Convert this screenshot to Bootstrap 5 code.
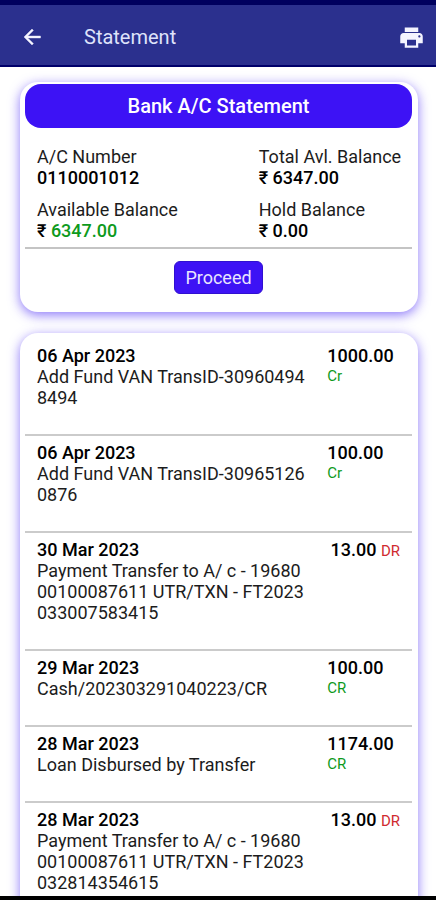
<!DOCTYPE html>
<html lang="en">
<head>
<meta charset="utf-8">
<meta name="viewport" content="width=device-width, initial-scale=1">
<title>Statement</title>
<link href="https://cdn.jsdelivr.net/npm/bootstrap@5.3.0/dist/css/bootstrap.min.css" rel="stylesheet">
<style>
  body { font: 400 18px/21px Roboto, sans-serif; color: #1c1c1c; background: #000; padding-bottom: 4px; }
  .app-bar { background: #2b308e; border-top: 5px solid #00005e; border-bottom: 2px solid #00006a; padding: 4px 11px 0 20px; height: 67px; color: #f4f4ff; }
  .app-bar h1 { font-size: 20px; font-weight: 400; padding-left: 40px; color: #dfe3fb; }
  .app-bar .btn { color: inherit; }
  .screen { background: #fff; padding: 15px 18px 0 20px; }
  .panel { border: 0; border-radius: 18px; padding: 0 6px 0 5px; box-shadow: 0 3px 12px rgba(64, 30, 245, .6); }
  .summary { margin-bottom: 21px; }
  .banner { background: #3d12f5; border-radius: 16px; font-size: 20px; font-weight: 500; line-height: 24px; padding: 10px; margin-top: 2px; }
  .strong-text { font-weight: 500; color: #000; }
  .balances { border-bottom: 2px solid #c4c4c4; row-gap: 11px; padding: 2px 0 6px; }
  .inset { padding-left: 12px; }
  .btn-proceed { --bs-btn-color: #e9e4ff; --bs-btn-bg: #3d12f5; --bs-btn-border-color: #3010d0; --bs-btn-hover-bg: #2f0ad0; --bs-btn-hover-color: #fff; --bs-btn-font-size: 18px; --bs-btn-padding-x: 10px; --bs-btn-padding-y: 5px; --bs-btn-border-radius: 6px; --bs-btn-line-height: 21px; }
  .proceed-row { padding: 12px 0 18px; }
  .history { padding-top: 6px; }
  .entry { padding: 6px 0 26px; border-bottom: 2px solid #cbcbcb; }
  .entry:last-child { border-bottom: 0; }
  .narration { word-break: break-all; padding-right: 8px; }
  .kind { font-size: 15px; }
  .debit-amount { padding-right: 12px; }
  .credit { color: #0d9a1c; }
  .debit { color: #d02a30; }
</style>
</head>
<body class="vh-100 d-flex flex-column overflow-hidden">
<header class="app-bar d-flex align-items-center flex-shrink-0">
  <button type="button" class="btn border-0 p-0 d-flex" aria-label="Back">
    <svg width="24" height="24" viewBox="0 0 24 24" fill="currentColor" aria-hidden="true"><path d="M20.500 11H7.830l5.590-5.590L12 4l-8 8 8 8 1.410-1.410L7.830 13H20.500v-2z" stroke="currentColor" stroke-width=".4"/></svg>
  </button>
  <h1 class="mb-0 me-auto">Statement</h1>
  <button type="button" class="btn border-0 p-0 d-flex" aria-label="Print">
    <svg width="27" height="27" viewBox="0 0 24 24" fill="currentColor" aria-hidden="true"><path d="M19 8H5c-1.660 0-3 1.340-3 3v6h4v4h12v-4h4v-6c0-1.660-1.340-3-3-3zm-3 11H8v-5h8v5zm3-7c-.55 0-1-.45-1-1s.45-1 1-1 1 .45 1 1-.45 1-1 1zm-1-9H6v4h12V3z"/></svg>
  </button>
</header>
<main class="screen flex-grow-1 overflow-hidden">
  <section class="card panel summary">
    <h2 class="banner text-white text-center mb-3">Bank A/C Statement</h2>
    <div class="row g-0 balances">
      <div class="col-7 inset"><div>A/C Number</div><div class="strong-text">0110001012</div></div>
      <div class="col-5 ps-2"><div>Total Avl. Balance</div><div class="strong-text">₹ 6347.00</div></div>
      <div class="col-7 inset"><div>Available Balance</div><div class="strong-text">₹ <span class="credit">6347.00</span></div></div>
      <div class="col-5 ps-2"><div>Hold Balance</div><div class="strong-text">₹ 0.00</div></div>
    </div>
    <div class="text-center proceed-row"><button type="button" class="btn btn-proceed">Proceed</button></div>
  </section>
  <section class="card panel history">
    <article class="entry row g-0">
      <div class="col-9 narration inset"><div class="strong-text">06 Apr 2023</div>Add Fund VAN TransID-309604948494</div>
      <div class="col-3 inset"><div class="strong-text">1000.00</div><div class="kind credit">Cr</div></div>
    </article>
    <article class="entry row g-0">
      <div class="col-9 narration inset"><div class="strong-text">06 Apr 2023</div>Add Fund VAN TransID-309651260876</div>
      <div class="col-3 inset"><div class="strong-text">100.00</div><div class="kind credit">Cr</div></div>
    </article>
    <article class="entry row g-0">
      <div class="col-9 narration inset"><div class="strong-text">30 Mar 2023</div>Payment Transfer to A/ c - 1968000100087611 UTR/TXN - FT2023033007583415</div>
      <div class="col-3 debit-amount text-end"><span class="strong-text">13.00</span> <span class="kind debit">DR</span></div>
    </article>
    <article class="entry row g-0">
      <div class="col-9 narration inset"><div class="strong-text">29 Mar 2023</div>Cash/202303291040223/CR</div>
      <div class="col-3 inset"><div class="strong-text">100.00</div><div class="kind credit">CR</div></div>
    </article>
    <article class="entry row g-0">
      <div class="col-9 narration inset"><div class="strong-text">28 Mar 2023</div>Loan Disbursed by Transfer</div>
      <div class="col-3 inset"><div class="strong-text">1174.00</div><div class="kind credit">CR</div></div>
    </article>
    <article class="entry row g-0">
      <div class="col-9 narration inset"><div class="strong-text">28 Mar 2023</div>Payment Transfer to A/ c - 1968000100087611 UTR/TXN - FT2023032814354615</div>
      <div class="col-3 debit-amount text-end"><span class="strong-text">13.00</span> <span class="kind debit">DR</span></div>
    </article>
  </section>
</main>
<script src="https://cdn.jsdelivr.net/npm/bootstrap@5.3.0/dist/js/bootstrap.bundle.min.js"></script>
</body>
</html>
